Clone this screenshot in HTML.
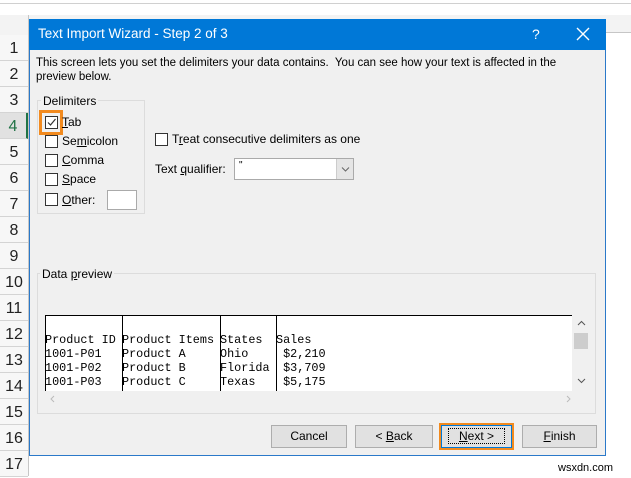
<!DOCTYPE html>
<html><head><style>
*{margin:0;padding:0;box-sizing:border-box}
body{width:631px;height:476px;overflow:hidden;background:#fff;position:relative;font-family:"Liberation Sans",sans-serif}
.a{position:absolute}
.rn{position:absolute;left:0;width:28px;text-align:center;font-size:16px;color:#222;border-bottom:1px solid #d4d4d4;height:26px;line-height:27px;background:#f7f7f7}
.t{position:absolute;font-size:12px;color:#000;white-space:nowrap}
.cb{position:absolute;width:13px;height:13px;border:1px solid #333;background:#fff}
.btn{position:absolute;top:425px;height:23px;border:1px solid #adadad;background:#e1e1e1;font-size:12px;text-align:center;line-height:21px;color:#000}
.mono{position:absolute;font-family:"Liberation Mono",monospace;font-size:11.8px;white-space:pre;line-height:14px;color:#000}
.vl{position:absolute;top:315px;width:1px;height:76px;background:#000}
</style></head><body>
<div class="a" style="left:0;top:0;width:631px;height:4px;background:#fff;border-bottom:1px solid #d0d0d0"></div>
<div class="a" style="left:0;top:15px;width:631px;height:18px;background:#f3f3f3;border-bottom:1px solid #c6c6c6"></div>
<div class="a" style="left:0;top:4px;width:631px;height:11px;background:#fff"></div>
<div class="a" style="left:0;top:15px;width:28px;height:20px;background:#f3f3f3"></div>
<div class="rn" style="top:35px">1</div><div class="rn" style="top:61px">2</div><div class="rn" style="top:87px">3</div>
<div class="rn" style="top:113px;color:#217346;background:#e1e1e1;border-right:2px solid #217346">4</div>
<div class="rn" style="top:139px">5</div><div class="rn" style="top:165px">6</div><div class="rn" style="top:191px">7</div>
<div class="rn" style="top:217px">8</div><div class="rn" style="top:243px">9</div><div class="rn" style="top:269px">10</div>
<div class="rn" style="top:295px">11</div><div class="rn" style="top:321px">12</div><div class="rn" style="top:347px">13</div>
<div class="rn" style="top:373px">14</div><div class="rn" style="top:399px">15</div><div class="rn" style="top:425px">16</div>
<div class="rn" style="top:451px">17</div>
<div class="a" style="left:28px;top:15px;width:1px;height:461px;background:#c6c6c6"></div>
<div class="a" style="left:29px;top:19px;width:577px;height:437px;background:#f0f0f0;border:1px solid #2b79c9"></div>
<div class="a" style="left:29px;top:19px;width:577px;height:31px;background:#0078d7"></div>
<div class="t" style="left:38px;top:26px;font-size:13.5px;color:#fff">Text Import Wizard - Step 2 of 3</div>
<div class="t" style="left:532px;top:26px;font-size:14px;color:#fff">?</div>
<svg class="a" style="left:576px;top:27px" width="14" height="14"><path d="M1 1L13 13M13 1L1 13" stroke="#fff" stroke-width="1.4"/></svg>
<div class="t" style="left:36px;top:57px;font-size:11.5px">This screen lets you set the delimiters your data contains.&nbsp; You can see how your text is affected in the</div>
<div class="t" style="left:36px;top:71px;font-size:11.5px">preview below.</div>
<div class="a" style="left:37px;top:100px;width:108px;height:114px;border:1px solid #dcdcdc"></div>
<div class="t" style="left:41px;top:94px;background:#f0f0f0;padding:0 2px">Delimiters</div>
<div class="a" style="left:39px;top:110px;width:24px;height:25px;border:3px solid #f28a1e"></div>
<div class="cb" style="left:45px;top:116px"><svg width="11" height="11" style="position:absolute;left:0;top:0"><path d="M2 5.5L4.5 8L9.5 2" stroke="#333" stroke-width="1.2" fill="none"/></svg></div>
<div class="t" style="left:62px;top:115px"><u>T</u>ab</div>
<div class="cb" style="left:45px;top:135px"></div><div class="t" style="left:62px;top:134px">Se<u>m</u>icolon</div>
<div class="cb" style="left:45px;top:154px"></div><div class="t" style="left:62px;top:153px"><u>C</u>omma</div>
<div class="cb" style="left:45px;top:173px"></div><div class="t" style="left:62px;top:172px"><u>S</u>pace</div>
<div class="cb" style="left:45px;top:193px"></div><div class="t" style="left:62px;top:193px"><u>O</u>ther:</div>
<div class="a" style="left:107px;top:190px;width:30px;height:20px;background:#fff;border:1px solid #aaa"></div>
<div class="cb" style="left:155px;top:133px"></div><div class="t" style="left:172px;top:132px">T<u>r</u>eat consecutive delimiters as one</div>
<div class="t" style="left:155px;top:162px">Text <u>q</u>ualifier:</div>
<div class="a" style="left:234px;top:158px;width:120px;height:22px;background:#fff;border:1px solid #aaa"></div>
<div class="a" style="left:336px;top:159px;width:17px;height:20px;background:#e5e5e5;border-left:1px solid #ccc"><svg width="17" height="20"><path d="M5 8.5L8.5 12L12 8.5" stroke="#666" fill="none"/></svg></div>
<div class="t" style="left:239px;top:160px;font-size:10px">"</div>
<div class="a" style="left:37px;top:273px;width:559px;height:141px;border:1px solid #dcdcdc"></div>
<div class="t" style="left:40px;top:267px;background:#f0f0f0;padding:0 2px">Data <u>p</u>review</div>
<div class="a" style="left:45px;top:315px;width:527px;height:76px;background:#fff;border-top:1px solid #000"></div>
<div class="vl" style="left:45px"></div><div class="vl" style="left:122px"></div><div class="vl" style="left:220px"></div><div class="vl" style="left:276px"></div>
<div class="mono" style="left:45px;top:333px">Product ID</div><div class="mono" style="left:122px;top:333px">Product Items</div><div class="mono" style="left:220px;top:333px">States</div><div class="mono" style="left:276px;top:333px">Sales</div>
<div class="mono" style="left:45px;top:347px">1001-P01
1001-P02
1001-P03</div>
<div class="mono" style="left:122px;top:347px">Product A
Product B
Product C</div>
<div class="mono" style="left:220px;top:347px">Ohio
Florida
Texas</div>
<div class="mono" style="left:276px;top:347px"> $2,210
 $3,709
 $5,175</div>
<div class="a" style="left:573px;top:316px;width:17px;height:75px;background:#f0f0f0"></div>
<svg class="a" style="left:573px;top:318px" width="17" height="10"><path d="M5 7L8.5 3.5L12 7" stroke="#555" fill="none"/></svg>
<div class="a" style="left:574px;top:333px;width:14px;height:16px;background:#cdcdcd"></div>
<svg class="a" style="left:573px;top:376px" width="17" height="10"><path d="M5 3L8.5 6.5L12 3" stroke="#555" fill="none"/></svg>
<svg class="a" style="left:48px;top:394px" width="10" height="10"><path d="M6 2L3 5L6 8" stroke="#bbb" fill="none"/></svg>
<svg class="a" style="left:563px;top:394px" width="10" height="10"><path d="M4 2L7 5L4 8" stroke="#bbb" fill="none"/></svg>
<div class="btn" style="left:271px;width:76px">Cancel</div>
<div class="btn" style="left:355px;width:78px">&lt; <u>B</u>ack</div>
<div class="a" style="left:439px;top:423px;width:75px;height:27px;border:2px solid #f28a1e"></div>
<div class="btn" style="left:441px;width:71px;border-color:#0078d7"><span style="border:1px dotted #000;padding:0 10px"><u>N</u>ext &gt;</span></div>
<div class="btn" style="left:522px;width:75px"><u>F</u>inish</div>
<div class="t" style="left:558px;top:462px;font-size:11px;color:#000">wsxdn.com</div>
</body></html>
